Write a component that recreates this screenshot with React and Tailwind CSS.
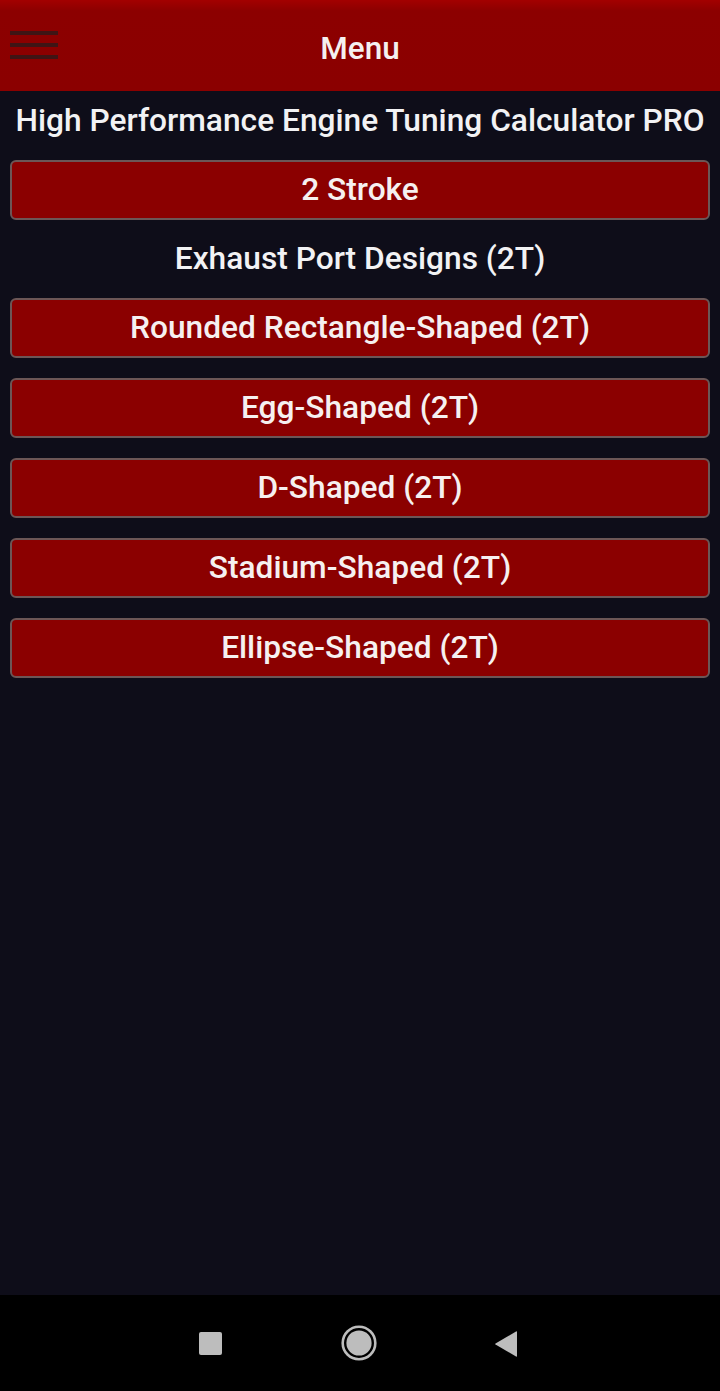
import React from "react";

const items = [
  "Rounded Rectangle-Shaped (2T)",
  "Egg-Shaped (2T)",
  "D-Shaped (2T)",
  "Stadium-Shaped (2T)",
  "Ellipse-Shaped (2T)",
];

function Btn({ children }) {
  return (
    <div className="h-[60px] rounded-[6px] border-2 border-[#6c5656] bg-[#8b0000] flex items-center justify-center text-[31.7px] leading-none font-medium text-[#f6f0f0]">
      {children}
    </div>
  );
}

export default function App() {
  return (
    <div
      className="w-[720px] h-[1391px] flex flex-col bg-[#0e0d19] text-white overflow-hidden"
      style={{ fontFamily: "Roboto, 'Noto Sans', sans-serif" }}
    >
      <header className="h-[91px] shrink-0 flex items-center relative bg-gradient-to-b from-[#a30000] via-[#8c0000] via-[12%] to-[#8b0000]">
        <div className="absolute left-[10px] top-[31px] flex flex-col gap-[8px]">
          <div className="w-[48px] h-[4px] bg-[#3f1515]" />
          <div className="w-[48px] h-[4px] bg-[#3f1515]" />
          <div className="w-[48px] h-[4px] bg-[#3f1515]" />
        </div>
        <div className="flex-1 text-center text-[31.5px] leading-none font-medium text-[#f5f0f0] mt-[6px]">Menu</div>
      </header>
      <main className="flex-1 px-[10px] flex flex-col">
        <div className="h-[60px] flex items-center justify-center text-[31.7px] leading-none font-medium text-[#f2f2f4] whitespace-nowrap">
          High Performance Engine Tuning Calculator PRO
        </div>
        <div className="mt-[9px]">
          <Btn>2 Stroke</Btn>
        </div>
        <div className="h-[78px] flex items-center justify-center text-[31.7px] leading-none font-medium text-[#f2f2f4]">
          Exhaust Port Designs (2T)
        </div>
        <div className="flex flex-col gap-[20px]">
          {items.map((t) => (
            <Btn key={t}>{t}</Btn>
          ))}
        </div>
      </main>
      <nav className="h-[96px] shrink-0 bg-black flex items-center">
        <div className="w-full relative h-full">
          <div className="absolute left-[199px] top-[37px] w-[23px] h-[23px] rounded-[2px] bg-[#bdbdbd]" />
          <svg className="absolute left-[341px] top-[30px]" width="36" height="36" viewBox="0 0 36 36">
            <circle cx="18" cy="18" r="16.3" fill="none" stroke="#bdbdbd" strokeWidth="2.6" />
            <circle cx="18" cy="18" r="12.6" fill="#bdbdbd" />
          </svg>
          <svg className="absolute left-[494px] top-[35px]" width="25" height="28" viewBox="0 0 25 28">
            <path d="M23 2 L23 26 Q23 27 22 26.5 L1.5 14.6 Q1 14 1.5 13.4 L22 1.5 Q23 1 23 2 Z" fill="#bdbdbd" />
          </svg>
        </div>
      </nav>
    </div>
  );
}
